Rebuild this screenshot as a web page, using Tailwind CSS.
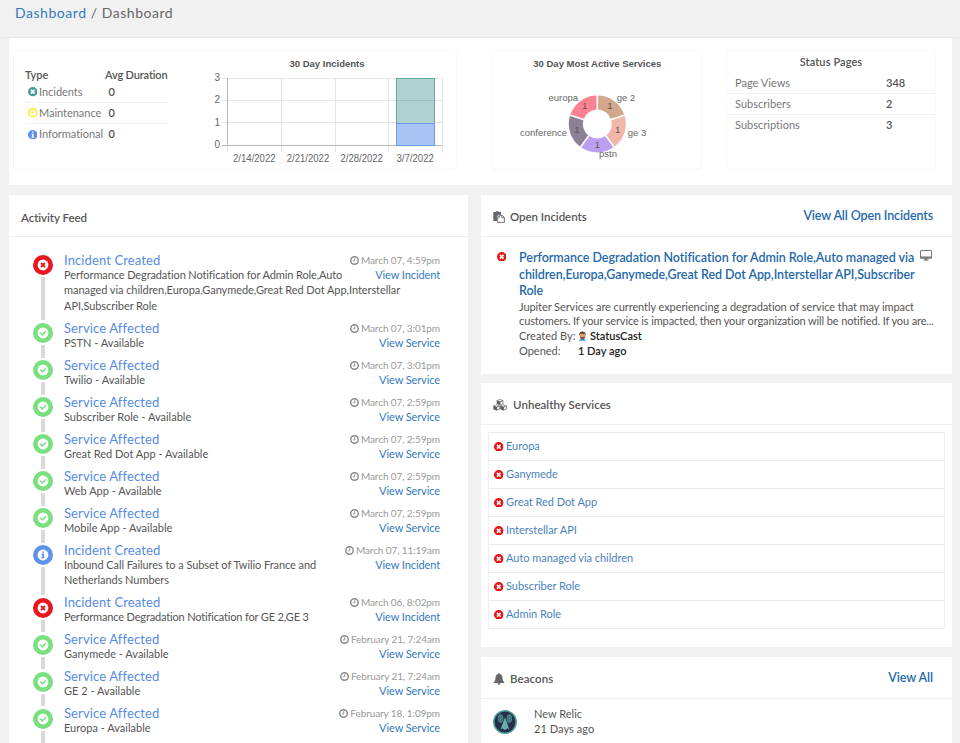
<!DOCTYPE html>
<html lang="en">
<head>
<meta charset="utf-8">
<title>Dashboard</title>
<script src="https://cdn.jsdelivr.net/npm/@tailwindcss/browser@4"></script>
</head>
<body class="h-[743px] w-[960px] overflow-hidden bg-[#f1f1f1] font-[Lato,sans-serif] text-[11px] text-[#555]">
<svg class="hidden">
  <symbol id="times" viewBox="0 0 12 12"><circle cx="6" cy="6" r="6" fill="currentColor"/><path d="M3.7 3.7l4.6 4.6M8.3 3.7L3.7 8.3" stroke="#fff" stroke-width="2"/></symbol>
  <symbol id="clock" viewBox="0 0 12 12"><circle cx="6" cy="6" r="5" fill="none" stroke="currentColor" stroke-width="1.900"/><path d="M6.3 3v3.500H3.9" fill="none" stroke="currentColor" stroke-width="1.200"/></symbol>
  <symbol id="info" viewBox="0 0 12 12"><circle cx="6" cy="6" r="6" fill="currentColor"/><path d="M5 2h2v1.6H5zM4.3 4.6H7v3.9h.8v1.3H4.3V8.5H5V5.900h-.7z" fill="#fff"/></symbol>
  <symbol id="n-times" viewBox="0 0 20 20"><circle cx="10" cy="10" r="10" fill="#e8171f"/><circle cx="10" cy="10" r="5.400" fill="#fff"/><path d="M8 8l4 4M12 8l-4 4" stroke="#e8171f" stroke-width="1.800"/></symbol>
  <symbol id="n-check" viewBox="0 0 20 20"><circle cx="10" cy="10" r="10" fill="#7adf7f"/><circle cx="10" cy="10" r="5.400" fill="#fff"/><path d="M7.200 9.800l2.200 2.100 3.500-3.600" fill="none" stroke="#7adf7f" stroke-width="1.500"/></symbol>
  <symbol id="n-info" viewBox="0 0 20 20"><circle cx="10" cy="10" r="10" fill="#5f92ea"/><circle cx="10" cy="10" r="5.400" fill="#fff"/><path d="M9.200 6.400h1.700v1.400H9.200zM8.500 8.600h2.400v3.300h.7v1.300H8.500v-1.300h.7V9.800h-.7z" fill="#5f92ea"/></symbol>
</svg>

<header class="h-[38px] border-b border-[#e9e9e9] pl-[15px] text-[14px] leading-[26px] tracking-[0.540px] text-[#666]"><a class="text-[#337ac0]">Dashboard</a> / Dashboard</header>

<main class="pl-[9px] pr-[8px]">
  <section class="flex h-[147px] bg-white pl-[4px] pt-[12px]">
    <div class="flex h-[120px] w-[444px] rounded-sm border border-[#f7f7f7] pl-[11px]">
      <div class="w-[143px] pt-[17px]">
        <div class="flex h-[14px] items-center text-[11px] font-semibold text-[#555]"><span class="w-[80px] shrink-0">Type</span><span class="tracking-[-0.150px] whitespace-nowrap">Avg Duration</span></div>
        <div id="types"></div>
      </div>
      <svg class="ml-[31px] h-[118px] w-[240px] font-['Liberation_Sans',sans-serif]" viewBox="199 51 240 118" fill="#666" font-size="9.500" overflow="visible">
        <text x="327" y="67" text-anchor="middle" font-weight="bold" font-size="9.800" fill="#555" textLength="75" lengthAdjust="spacingAndGlyphs">30 Day Incidents</text>
        <path d="M222 78.500h220M222 100.500h220M222 122.500h220M281.500 78v74M335.500 78v74M388.500 78v74M442.500 78v74M227.500 145v7" stroke="#e4e4e4" fill="none"/>
        <path d="M227.500 78v67M222 145.500h220" stroke="#b9b9b9" fill="none"/>
        <rect x="396" y="78" width="39" height="45" fill="#b0d1d0"/><path d="M396.500 123V78.500h38V123" stroke="#63a99f" fill="none"/><path d="M397 100.500h37" stroke="#9dbfbd"/>
        <rect x="396.500" y="123.500" width="38" height="22" fill="#a8c4f4" stroke="#6a9bf0"/>
        <g text-anchor="end" font-size="10"><text x="220" y="81">3</text><text x="220" y="103">2</text><text x="220" y="125.500">1</text><text x="220" y="148">0</text></g>
        <g text-anchor="middle" font-size="10"><text x="254.300" y="161.500" textLength="42.500" lengthAdjust="spacingAndGlyphs">2/14/2022</text><text x="308" y="161.500" textLength="42.500" lengthAdjust="spacingAndGlyphs">2/21/2022</text><text x="361.700" y="161.500" textLength="42.500" lengthAdjust="spacingAndGlyphs">2/28/2022</text><text x="415.200" y="161.500" textLength="37.500" lengthAdjust="spacingAndGlyphs">3/7/2022</text></g>
      </svg>
    </div>
    <div class="ml-[35px] h-[120px] w-[210px] rounded-sm border border-[#f7f7f7]">
      <svg class="h-[118px] w-[208px] font-['Liberation_Sans',sans-serif]" viewBox="493 51 208 118" font-size="9.500" fill="#666">
        <text x="597.300" y="67" text-anchor="middle" font-weight="bold" font-size="9.800" fill="#555" textLength="128" lengthAdjust="spacingAndGlyphs">30 Day Most Active Services</text>
        <g id="donut" fill="none" stroke-width="14"></g>
        <text x="548.500" y="101">europa</text><text x="616.800" y="101">ge 2</text><text x="520" y="135.500">conference</text><text x="627.700" y="135.500">ge 3</text><text x="599" y="156.500">pstn</text>
        <g text-anchor="middle" fill="#5b5555"><text x="584.700" y="108.500">1</text><text x="610" y="108.500">1</text><text x="617.700" y="133">1</text><text x="597.300" y="148">1</text><text x="577" y="133">1</text></g>
      </svg>
    </div>
    <div class="ml-[24px] h-[120px] w-[210px] rounded-sm border border-[#f7f7f7] pt-[3px]">
      <h3 class="text-center text-[11px] font-semibold leading-[15px] tracking-[0.100px]">Status Pages</h3>
      <div id="pages" class="pt-[4.500px]"></div>
    </div>
  </section>

  <div class="flex gap-[13px] pt-[10px]">
    <section class="h-[560px] w-[459px] bg-white">
      <h2 class="h-[42px] border-b border-[#efefef] pl-[12px] pt-[1px] text-[11.500px] font-semibold leading-[43px] tracking-[-0.050px]">Activity Feed</h2>
      <div id="feed" class="pl-[24px] pr-[28px] pt-[15.500px]"></div>
    </section>

    <div class="flex w-[471px] flex-col gap-[9.500px]">
      <section class="h-[178.500px] bg-white">
        <div class="flex h-[42px] items-center border-b border-[#efefef] pl-[12px] pr-[19px]">
          <svg class="mt-[2px] h-[12px] w-[12px]" viewBox="0 0 12 12"><path d="M.3 1h2.400V.2h3V1H8v2.800H5.500L4 5.300V10H.3z" fill="#666"/><path d="M4.700 5.900L6.400 4.300h2.700l2.300 2.200v4.900H4.700zM8.800 4.400v2.300h2.400M6.600 4.500v1.600H4.900" fill="#fff" stroke="#666" stroke-width=".9"/></svg>
          <h2 class="ml-[5px] mt-[3px] flex-1 text-[11.500px] font-semibold tracking-[-0.050px]">Open Incidents</h2>
          <a class="mt-[2px] text-[12.500px] font-semibold tracking-[-0.120px] text-[#2468ac]">View All Open Incidents</a>
        </div>
        <div class="flex pl-[15.500px] pt-[13px]">
          <svg class="mt-[1.500px] h-[9.500px] w-[9.500px] shrink-0 text-[#ea1014]"><use href="#times"/></svg>
          <div class="ml-[13px] w-[420px]">
            <div class="flex">
              <a class="w-[401px] shrink-0 whitespace-nowrap text-[12.500px] font-semibold leading-[16.700px] text-[#2468ac]"><span class="tracking-[-0.040px]">Performance Degradation Notification for Admin Role,Auto managed via</span><br><span class="tracking-[-0.080px]">children,Europa,Ganymede,Great Red Dot App,Interstellar API,Subscriber</span><br><span class="tracking-[-0.080px]">Role</span></a>
              <svg class="-mt-[0.500px] h-[11px] w-[12px] shrink-0" viewBox="0 0 12 11"><rect x=".5" y=".5" width="11" height="7.500" rx=".5" fill="#fff" stroke="#777"/><path d="M0 6.500h12v2H7.500v1.300h1.300v.8H3.200v-.8h1.300V8.500H0z" fill="#777"/></svg>
            </div>
            <p class="whitespace-nowrap text-[11px] leading-[14.300px]"><span class="tracking-[-0.080px]">Jupiter Services are currently experiencing a degradation of service that may impact</span><br><span class="tracking-[-0.120px]">customers. If your service is impacted, then your organization will be notified. If you are...</span></p>
            <div class="flex h-[14.700px] items-center"><span class="w-[59px]">Created By:</span>
              <svg class="mr-[3px] h-[10px] w-[9px]" viewBox="0 0 9 10"><path d="M1 9.800c0-2.300 7-2.300 7 0z" fill="#3e95d8"/><ellipse cx="4.500" cy="4.700" rx="3" ry="3.400" fill="#d99f75"/><path d="M1.200 4.500C.4-1 8.600-1 7.800 4.500L6.500 2.800h-4z" fill="#633a25"/><path d="M2 5.500c1 .9 4 .9 5 0 0 3.600-5 3.600-5 0z" fill="#75462e"/></svg>
              <b class="font-semibold text-[#222]">StatusCast</b></div>
            <div class="flex h-[14.700px] items-center pt-[1px]"><span class="w-[59px]">Opened:</span><b class="font-semibold text-[#222]">1 Day ago</b></div>
          </div>
        </div>
      </section>

      <section class="h-[264px] bg-white">
        <div class="flex h-[42px] items-center border-b border-[#efefef] pl-[12px]">
          <svg class="mt-[2px] h-[12px] w-[14px]" viewBox="0 0 14 12" fill="#5c5c5c" stroke="#fff" stroke-width=".3"><g id="cube"><path d="M7 0l3.400 1.300v3.700L7 6.600 3.600 5V1.300z"/><path d="M5 1.600L7 2.300l2-.7L7 1z" fill="#fff"/><path d="M7.600 3.300l1.900-.8v1.900l-1.900.9z" fill="#fff"/></g><use href="#cube" x="-3.400" y="5.200"/><use href="#cube" x="3.400" y="5.200"/></svg>
          <h2 class="ml-[6px] mt-[3px] text-[11.500px] font-semibold tracking-[0.050px]">Unhealthy Services</h2>
        </div>
        <ul id="svc" class="mx-[7px] mt-[7px] border-x border-t border-[#ececec] border-x-[#efefef]"></ul>
      </section>

      <section class="h-[100px] bg-white">
        <div class="flex h-[42px] items-center border-b border-[#efefef] pl-[12px] pr-[19px]">
          <svg class="mt-[3px] h-[12px] w-[12px]" viewBox="0 0 12 12"><path d="M6 0c.5 0 .8.400.8.900C8.700 1.300 9.500 3 9.500 4.500c0 2.500.7 3.700 1.800 4.800v.7H.7v-.7C1.800 8.200 2.500 7 2.500 4.500 2.500 3 3.300 1.300 5.200.9c0-.5.3-.9.8-.9zM4.600 10.300h2.800c0 2-2.800 2-2.800 0z" fill="#666"/></svg>
          <h2 class="ml-[5px] mt-[4px] flex-1 text-[11.500px] font-semibold tracking-[0.100px]">Beacons</h2>
          <a class="mt-[2px] text-[12.500px] font-semibold tracking-[-0.050px] text-[#2468ac]">View All</a>
        </div>
        <div class="flex pl-[12px] pt-[7px]">
          <svg class="mt-[4px] h-[24px] w-[24px]" viewBox="0 0 24 24"><circle cx="12" cy="12" r="11.200" fill="#27304a" stroke="#4fa39b" stroke-width="1.500"/><g fill="#38636f" stroke="#62a5a4" stroke-width=".7"><ellipse cx="7.600" cy="8.500" rx="2.300" ry="4" /><ellipse cx="16.400" cy="8.500" rx="2.300" ry="4"/><path d="M7.600 5.500v6M16.400 5.500v6"/></g><path d="M12 7.500l1.800 4.500 2.500 7.500-2-1.200-1.300 1.400h-2l-1.300-1.400-2 1.200L10.200 12z" fill="#6aaead"/></svg>
          <div class="ml-[17px] leading-[15px]"><div>New Relic</div><div class="tracking-[0.050px]">21 Days ago</div></div>
        </div>
      </section>
    </div>
  </div>
</main>

<script>
const put = (id, html) => document.getElementById(id).innerHTML = html;

put('types', [['times','Incidents','text-[#4b9c98]'],['clock','Maintenance','text-[#ffe612]'],['info','Informational','text-[#5a8ff0]']].map(([i,t,c],n) =>
  `<div class="flex h-[21px] items-center ${n<2?'border-b border-[#f2f2f2]':''} pl-[2.500px] text-[#777]"><svg class="h-[9.500px] w-[9.500px] ${c}"><use href="#${i}"/></svg><span class="ml-[2px] w-[69.500px] tracking-[-0.030px]">${t}</span><b class="font-semibold text-[#555]">0</b></div>`).join(''));

put('pages', [['Page Views','348'],['Subscribers','2'],['Subscriptions','3']].map(([t,v],n) =>
  `<div class="flex h-[20.800px] items-center ${n<2?'border-b border-[#f2f2f2]':''} pl-[8px] text-[#777]"><span class="w-[151px] tracking-[0.020px]">${t}</span><b class="font-semibold text-[#555]">${v}</b></div>`).join(''));

put('svc', ['Europa','Ganymede','Great Red Dot App','Interstellar API','Auto managed via children','Subscriber Role','Admin Role'].map(t =>
  `<li class="flex h-[28px] items-center border-b-[1.500px] border-[#ececec] pl-[5px] text-[#4a82bd]"><svg class="mb-[0.500px] h-[9.500px] w-[9.500px] text-[#ea1014]"><use href="#times"/></svg><span class="ml-[2.500px] tracking-[-0.030px]">${t}</span></li>`).join(''));

const feed = [
 ['times','March 07, 4:59pm','Performance Degradation Notification for Admin Role,Auto','managed via children,Europa,Ganymede,Great Red Dot App,Interstellar','API,Subscriber Role'],
 ['check','March 07, 3:01pm','PSTN - Available'],
 ['check','March 07, 3:01pm','Twilio - Available'],
 ['check','March 07, 2:59pm','Subscriber Role - Available'],
 ['check','March 07, 2:59pm','Great Red Dot App - Available'],
 ['check','March 07, 2:59pm','Web App - Available'],
 ['check','March 07, 2:59pm','Mobile App - Available'],
 ['info','March 07, 11:19am','Inbound Call Failures to a Subset of Twilio France and','Netherlands Numbers'],
 ['times','March 06, 8:02pm','Performance Degradation Notification for GE 2,GE 3'],
 ['check','February 21, 7:24am','Ganymede - Available'],
 ['check','February 21, 7:24am','GE 2 - Available'],
 ['check','February 18, 1:09pm','Europa - Available']];
put('feed', feed.map(([k,d,...l]) => {
  const inc = k !== 'check';
  const track = (x, i) => k === 'check' ? 'tracking-[0px]' : i ? 'tracking-[-0.060px]' : x.endsWith('GE 3') ? 'tracking-[-0.160px]' : k === 'info' ? 'tracking-[-0.070px]' : 'tracking-[-0.110px]';
  return `<article class="flex">
    <div class="flex w-[20px] flex-col items-center pt-[2.500px]"><svg class="h-[20px] w-[20px] shrink-0"><use href="#n-${k}"/></svg><div class="mt-[2px] w-[3.500px] flex-1 bg-[#d9d9d9]"></div></div>
    <div class="ml-[11px] flex-1 pb-[7.500px]">
      <div class="flex h-[14.100px] items-center justify-between"><span class="pt-[1.500px] text-[13px] tracking-[0.110px] text-[#558be6]">${inc?'Incident Created':'Service Affected'}</span><span class="flex items-center gap-[2px] pt-[1px] text-[10px] tracking-[-0.100px] text-[#999]"><svg class="h-[9px] w-[9px] text-[#888]"><use href="#clock"/></svg>${d}</span></div>
      <div class="flex justify-between whitespace-nowrap leading-[15.450px]"><div class="w-[0px]">${l.map((x,i)=>`<div class="${track(x,i)}">${x}</div>`).join('')}</div><a class="tracking-[-0.100px] text-[#337ac0]">${inc?'View Incident':'View Service'}</a></div>
    </div></article>`;
}).join(''));

// Five equal slices, clockwise from twelve o'clock
const R = 21.5, cx = 597.3, cy = 124, at = a => [cx + R*Math.sin(a), cy - R*Math.cos(a)].join(' ');
put('donut', ['#d2a78c','#f2b5a9','#bb9ef0','#8c8096','#fb8290'].map((c,i) => {
  const a = i*Math.PI*.4, b = a + Math.PI*.4;
  return `<path stroke="${c}" d="M${at(a)}A${R} ${R} 0 0 1 ${at(b)}"/>`;
}).join('') + [0,1,2,3,4].map(i => { const a = i*Math.PI*.4;
  return `<path stroke="#fff" stroke-width="1.6" d="M${cx} ${cy}L${cx+30*Math.sin(a)} ${cy-30*Math.cos(a)}"/>`; }).join(''));
</script>
</body>
</html>
